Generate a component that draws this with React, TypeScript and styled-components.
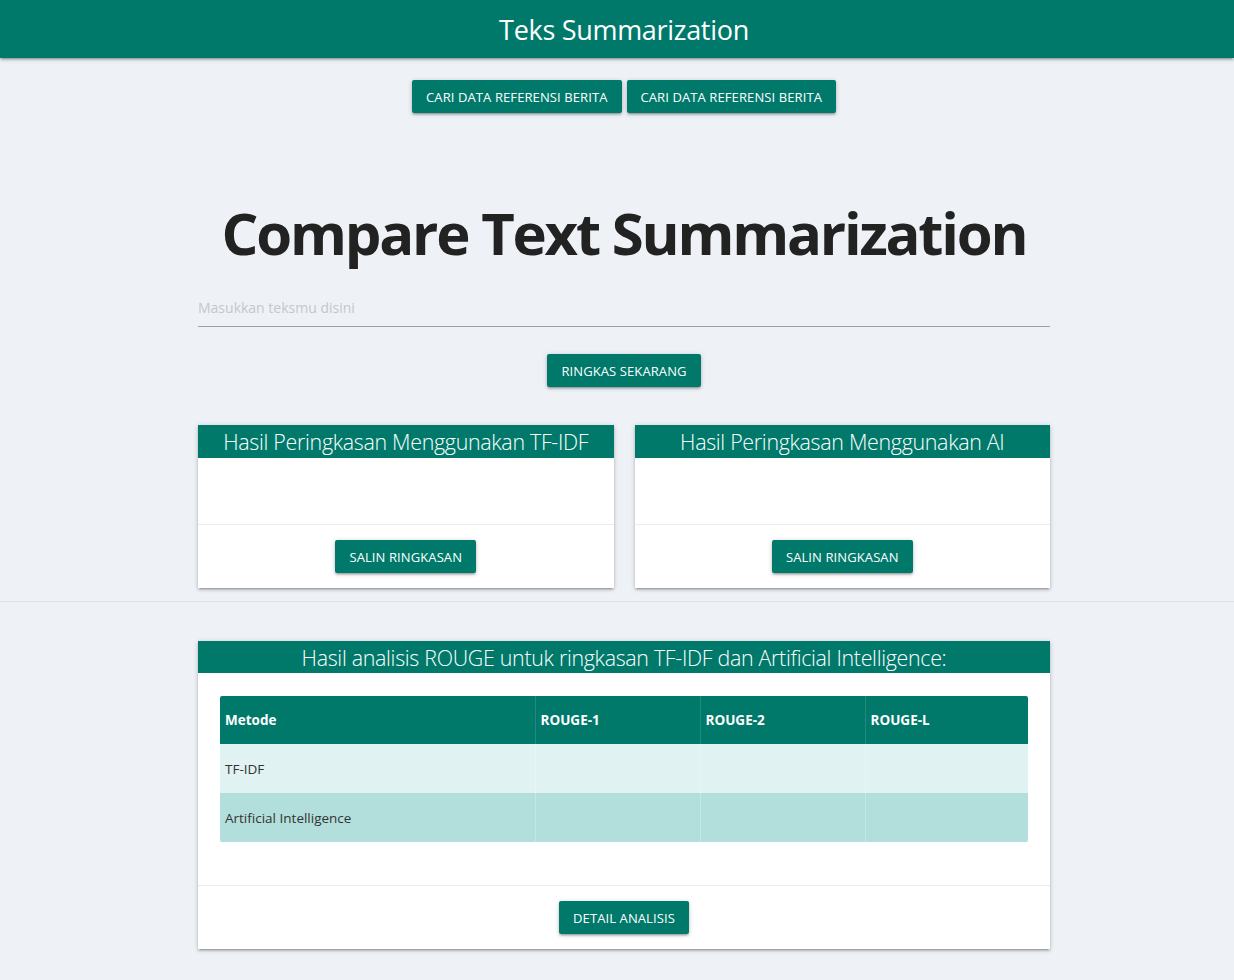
import React from "react";
import styled, { createGlobalStyle } from "styled-components";

const teal = "#00796b";
const shadow =
  "0 2px 2px 0 rgba(0,0,0,0.14), 0 3px 1px -2px rgba(0,0,0,0.12), 0 1px 5px 0 rgba(0,0,0,0.2)";

const GlobalStyle = createGlobalStyle`
  body {
    margin: 0;
    background: #eef2f7;
    font-family: "Open Sans", "Noto Sans", sans-serif;
    color: #222;
  }
  * { box-sizing: border-box; }
`;

const Nav = styled.nav`
  height: 58px;
  background: ${teal};
  box-shadow: ${shadow};
  display: flex;
  align-items: center;
  justify-content: center;
  padding-left: 14px;
`;

const NavTitle = styled.div`
  color: #fff;
  font-size: 27px;
  letter-spacing: -0.3px;
`;

const Main = styled.main`
  width: 852px;
  margin-left: calc(50% - 419px);
  display: flex;
  flex-direction: column;
  align-items: center;
`;

const ButtonRow = styled.div`
  display: flex;
  gap: 5px;
  margin-top: 22px;
`;

const Button = styled.button`
  height: 33px;
  padding: 0 14px;
  border: none;
  border-radius: 2px;
  background: ${teal};
  color: #fff;
  font-family: inherit;
  font-size: 13px;
  letter-spacing: 0.1px;
  text-transform: uppercase;
  box-shadow: ${shadow};
  cursor: pointer;
`;

const Heading = styled.h1`
  margin: 85px 0 0;
  font-size: 58px;
  line-height: 70px;
  font-weight: 700;
  letter-spacing: -2.2px;
  white-space: nowrap;
  color: #222;
`;

const Input = styled.input`
  width: 100%;
  height: 46px;
  margin: 13px 0 27px;
  padding: 8px 0 0;
  border: none;
  border-bottom: 1px solid #9e9e9e;
  background: transparent;
  font-family: inherit;
  font-size: 14px;
  outline: none;
  &::placeholder {
    color: #c4c7cb;
  }
`;

const CardGrid = styled.div`
  width: 100%;
  display: grid;
  grid-template-columns: 1fr 1fr;
  gap: 21px;
  margin-top: 38px;
`;

const Card = styled.section`
  background: #fff;
  box-shadow: ${shadow};
  display: flex;
  flex-direction: column;
`;

const CardTitle = styled.div`
  background: ${teal};
  color: #fff;
  height: 33px;
  line-height: 33px;
  text-align: center;
  font-size: 21.4px;
  font-weight: 300;
  letter-spacing: -0.3px;
`;

const CardBody = styled.div<{ $pad?: boolean }>`
  min-height: 66px;
  padding: ${(p) => (p.$pad ? "23px 22px 43px" : "0")};
`;

const CardAction = styled.div`
  border-top: 1px solid rgba(160, 160, 160, 0.2);
  padding: 15px 0 15px;
  display: flex;
  justify-content: center;
`;

const Divider = styled.hr`
  border: none;
  border-top: 1px solid #dfe3e8;
  margin: 13px 0 0;
`;

const Wide = styled(Card)`
  width: 100%;
  margin: 39px 0 32px;
`;

const WideTitle = styled(CardTitle)`
  height: 32px;
  line-height: 34px;
`;

const Table = styled.table`
  width: 100%;
  border-collapse: collapse;
  font-size: 13.5px;
  border-radius: 2px;
  overflow: hidden;
`;

const Th = styled.th<{ $w: number }>`
  width: ${(p) => p.$w}px;
  height: 48px;
  background: ${teal};
  color: #fff;
  text-align: left;
  padding: 0 5px;
  font-weight: 700;
  border-left: 1px solid rgba(255, 255, 255, 0.12);
  &:first-child { border-left: none; }
`;

const Tr = styled.tr<{ $alt?: boolean }>`
  background: ${(p) => (p.$alt ? "#b2dfdb" : "#e0f2f1")};
`;

const Td = styled.td`
  height: 49px;
  padding: 0 5px;
  color: #333;
  border-left: 1px solid rgba(255, 255, 255, 0.25);
  &:first-child { border-left: none; }
`;

const columns = [
  { label: "Metode", w: 315 },
  { label: "ROUGE-1", w: 165 },
  { label: "ROUGE-2", w: 165 },
  { label: "ROUGE-L", w: 163 },
];

const rows = ["TF-IDF", "Artificial Intelligence"];

function SummaryCard({ title }: { title: string }) {
  return (
    <Card>
      <CardTitle>{title}</CardTitle>
      <CardBody />
      <CardAction>
        <Button>Salin Ringkasan</Button>
      </CardAction>
    </Card>
  );
}

export default function App() {
  return (
    <>
      <GlobalStyle />
      <Nav>
        <NavTitle>Teks Summarization</NavTitle>
      </Nav>
      <Main>
        <ButtonRow>
          <Button>Cari Data Referensi Berita</Button>
          <Button>Cari Data Referensi Berita</Button>
        </ButtonRow>
        <Heading>Compare Text Summarization</Heading>
        <Input placeholder="Masukkan teksmu disini" />
        <Button>Ringkas Sekarang</Button>
        <CardGrid>
          <SummaryCard title="Hasil Peringkasan Menggunakan TF-IDF" />
          <SummaryCard title="Hasil Peringkasan Menggunakan AI" />
        </CardGrid>
      </Main>
      <Divider />
      <Main>
        <Wide>
          <WideTitle>
            Hasil analisis ROUGE untuk ringkasan TF-IDF dan Artificial Intelligence:
          </WideTitle>
          <CardBody $pad>
            <Table>
              <thead>
                <tr>
                  {columns.map((c) => (
                    <Th key={c.label} $w={c.w}>
                      {c.label}
                    </Th>
                  ))}
                </tr>
              </thead>
              <tbody>
                {rows.map((r, i) => (
                  <Tr key={r} $alt={i === 1}>
                    <Td>{r}</Td>
                    <Td />
                    <Td />
                    <Td />
                  </Tr>
                ))}
              </tbody>
            </Table>
          </CardBody>
          <CardAction>
            <Button>Detail Analisis</Button>
          </CardAction>
        </Wide>
      </Main>
    </>
  );
}
